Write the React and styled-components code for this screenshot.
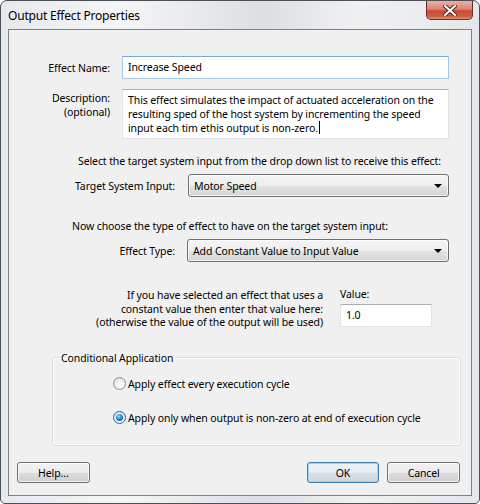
import React, { useState } from "react";
import styled, { createGlobalStyle, css } from "styled-components";

const GlobalStyle = createGlobalStyle`
  html, body {
    margin: 0;
    padding: 0;
    background: #ffffff;
  }
  body {
    font-family: "Noto Sans", "DejaVu Sans", sans-serif;
    font-size: 10.5px;
    letter-spacing: -0.1px;
    color: #000;
  }
`;

// Window chrome
const Window = styled.div`
  width: 480px;
  height: 504px;
  box-sizing: border-box;
  border: 1px solid #4a4f55;
  border-radius: 7px 7px 5px 5px;
  background: linear-gradient(90deg, #e6e9ec 0%, #f4f5f7 25%, #dcdfe2 55%, #f0f1f3 75%, #e4e7ea 100%);
  display: flex;
  flex-direction: column;
  overflow: hidden;
`;

const TitleBar = styled.div`
  height: 28px;
  display: flex;
  align-items: flex-start;
  justify-content: space-between;
  padding-left: 7px;
`;

const Title = styled.div`
  font-size: 12px;
  letter-spacing: -0.2px;
  line-height: 14px;
  margin-top: 8px;
  color: #000;
`;

const CloseButton = styled.div`
  width: 45px;
  height: 18px;
  margin-right: 6px;
  border: 1px solid #6d2c24;
  border-top: none;
  border-radius: 0 0 5px 5px;
  background: linear-gradient(180deg, #e8b0a3 0%, #dc8571 45%, #c84a32 55%, #cf5e42 85%, #e09272 100%);
  display: flex;
  align-items: center;
  justify-content: center;
`;

const Client = styled.div`
  flex: 1;
  margin: 0 7px 7px 7px;
  border: 1px solid #7d8186;
  background: #f0f0f0;
  display: flex;
  flex-direction: column;
`;

// Form rows
const Row = styled.div`
  display: flex;
  align-items: ${(p) => (p.$top ? "flex-start" : "center")};
  margin-top: ${(p) => p.$mt}px;
`;

const Label = styled.div`
  box-sizing: border-box;
  width: ${(p) => p.$w}px;
  padding-right: ${(p) => p.$gap}px;
  text-align: right;
  line-height: 14px;
  flex-shrink: 0;
  ${(p) =>
    p.$top &&
    css`
      padding-top: 2px;
    `}
`;

const TextBox = styled.div`
  box-sizing: border-box;
  width: ${(p) => p.$w}px;
  height: ${(p) => p.$h}px;
  background: #fff;
  border: 1px solid #e2e3ea;
  border-top-color: #abadb3;
  padding: 3px 5px;
  line-height: 14px;
  ${(p) =>
    p.$focus &&
    css`
      border-color: #a6c9e8;
      border-top-color: #7ba8d6;
    `}
`;

const Caret = styled.span`
  display: inline-block;
  width: 1px;
  height: 13px;
  background: #000;
  vertical-align: -2px;
  margin-left: 1px;
`;

const Instruction = styled.div`
  margin-top: ${(p) => p.$mt}px;
  padding-left: ${(p) => p.$pl}px;
  line-height: 14px;
`;

const Select = styled.div`
  box-sizing: border-box;
  width: ${(p) => p.$w}px;
  height: 23px;
  border: 1px solid #707070;
  border-radius: 3px;
  background: linear-gradient(180deg, #f4f4f4 0%, #eeeeee 50%, #e2e2e2 51%, #d6d6d6 100%);
  box-shadow: inset 0 0 0 1px rgba(255, 255, 255, 0.7);
  display: flex;
  align-items: center;
  justify-content: space-between;
  padding: 0 6px 0 5px;
`;

const Arrow = styled.span`
  width: 0;
  height: 0;
  border-left: 4px solid transparent;
  border-right: 4px solid transparent;
  border-top: 4px solid #000;
`;

const ValueBlock = styled.div`
  display: flex;
  margin-top: 25px;
`;

const ValueHint = styled.div`
  width: 314px;
  text-align: right;
  line-height: 13.5px;
  padding-top: 2px;
  flex-shrink: 0;
`;

const ValueField = styled.div`
  margin-left: 17px;
  display: flex;
  flex-direction: column;
  gap: 3px;
`;

const Group = styled.fieldset`
  margin: 21px 10px 0 43px;
  padding: 0;
  height: 93px;
  border: 1px solid #d5dfe5;
  border-radius: 3px;
  box-shadow: inset 0 0 0 1px #ffffff;
  display: flex;
  flex-direction: column;
  gap: 20px;
`;

const Legend = styled.legend`
  margin-left: 6px;
  padding: 0 2px;
  line-height: 14px;
`;

const RadioRow = styled.label`
  display: flex;
  align-items: center;
  gap: 2px;
  padding-left: 60px;
  margin-top: ${(p) => p.$mt}px;
  line-height: 14px;
  cursor: default;
`;

const RadioDot = styled.span`
  box-sizing: border-box;
  width: 13px;
  height: 13px;
  border-radius: 50%;
  border: 1px solid #8f8f8f;
  background: radial-gradient(circle at 60% 65%, #ffffff 0%, #f2f2f2 40%, #d2d2d2 100%);
  display: flex;
  align-items: center;
  justify-content: center;
  ${(p) =>
    p.$on &&
    css`
      border-color: #2c628b;
      &::after {
        content: "";
        width: 7px;
        height: 7px;
        border-radius: 50%;
        background: radial-gradient(circle at 40% 35%, #9fe0ff 0%, #1f8bd1 45%, #0a4f8a 100%);
      }
    `}
`;

const ButtonBar = styled.div`
  display: flex;
  align-items: center;
  margin-top: auto;
  margin-bottom: 12px;
  padding: 0 11px 0 8px;
`;

const Button = styled.button`
  box-sizing: border-box;
  width: 73px;
  height: 21px;
  font-family: inherit;
  font-size: 10.5px;
  letter-spacing: -0.1px;
  color: #000;
  border: 1px solid #707070;
  border-radius: 3px;
  background: linear-gradient(180deg, #f2f2f2 0%, #ebebeb 50%, #dddddd 51%, #cfcfcf 100%);
  box-shadow: inset 0 0 0 1px rgba(255, 255, 255, 0.75);
  padding: 0;
  margin-left: ${(p) => p.$ml || 0}px;
  ${(p) =>
    p.$default &&
    css`
      border-color: #3c7fb1;
      box-shadow: inset 0 0 0 1px #9fd5f2;
      background: linear-gradient(180deg, #eef3f6 0%, #e6ecf0 50%, #d9e1e6 51%, #ccd6dc 100%);
    `}
`;

function App() {
  const [mode, setMode] = useState("nonzero");

  return (
    <>
      <GlobalStyle />
      <Window>
        <TitleBar>
          <Title>Output Effect Properties</Title>
          <CloseButton>
            <svg width="14" height="11" viewBox="0 0 14 11">
              <path
                d="M2 1 L12 10 M12 1 L2 10"
                stroke="#5a2a22"
                strokeWidth="4"
                strokeLinecap="square"
              />
              <path
                d="M2 1 L12 10 M12 1 L2 10"
                stroke="#ffffff"
                strokeWidth="2"
                strokeLinecap="square"
              />
            </svg>
          </CloseButton>
        </TitleBar>

        <Client>
          <Row $mt={26}>
            <Label $w={113} $gap={12}>Effect Name:</Label>
            <TextBox $w={327} $h={23} $focus>
              Increase Speed
            </TextBox>
          </Row>

          <Row $mt={10} $top>
            <Label $w={113} $gap={12} $top>
              Description:
              <br />
              (optional)
            </Label>
            <TextBox $w={327} $h={50}>
              This effect simulates the impact of actuated acceleration on the resulting sped
              of the host system by incrementing the speed input each tim ethis output is
              non-zero.
              <Caret />
            </TextBox>
          </Row>

          <Instruction $mt={15} $pl={69}>
            Select the target system input from the drop down list to receive this effect:
          </Instruction>

          <Row $mt={6}>
            <Label $w={179} $gap={13}>Target System Input:</Label>
            <Select $w={261}>
              <span>Motor Speed</span>
              <Arrow />
            </Select>
          </Row>

          <Instruction $mt={22} $pl={63}>
            Now choose the type of effect to have on the target system input:
          </Instruction>

          <Row $mt={6}>
            <Label $w={178} $gap={12}>Effect Type:</Label>
            <Select $w={262}>
              <span>Add Constant Value to Input Value</span>
              <Arrow />
            </Select>
          </Row>

          <ValueBlock>
            <ValueHint>
              If you have selected an effect that uses a
              <br />
              constant value then enter that value here:
              <br />
              (otherwise the value of the output will be used)
            </ValueHint>
            <ValueField>
              <span>Value:</span>
              <TextBox $w={92} $h={23}>1.0</TextBox>
            </ValueField>
          </ValueBlock>

          <Group>
            <Legend>Conditional Application</Legend>
            <RadioRow $mt={12} onClick={() => setMode("every")}>
              <RadioDot $on={mode === "every"} />
              Apply effect every execution cycle
            </RadioRow>
            <RadioRow $mt={0} onClick={() => setMode("nonzero")}>
              <RadioDot $on={mode === "nonzero"} />
              Apply only when output is non-zero at end of execution cycle
            </RadioRow>
          </Group>

          <ButtonBar>
            <Button>Help...</Button>
            <Button $ml={217} $default>OK</Button>
            <Button $ml={8}>Cancel</Button>
          </ButtonBar>
        </Client>
      </Window>
    </>
  );
}

export default App;
